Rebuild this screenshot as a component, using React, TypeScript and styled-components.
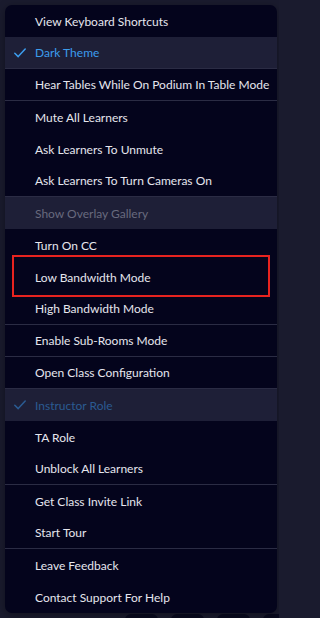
import React from "react";
import styled, { createGlobalStyle } from "styled-components";

const Global = createGlobalStyle`
  html, body { margin: 0; padding: 0; background: #1a1b2e; }
  body { width: 279px; height: 618px; overflow: hidden; font-family: Lato, "Noto Sans", sans-serif; }
`;

const Page = styled.div`
  position: relative;
  width: 279px;
  height: 618px;
  background: #1a1b2e;
  display: flex;
  flex-direction: column;
  justify-content: flex-end;
  overflow: hidden;
`;

const Toolbar = styled.div`
  display: flex;
  gap: 13px;
  padding-left: 125px;
  height: 4px;
`;

const ToolButton = styled.div`
  flex: 0 0 33px;
  height: 30px;
  border-radius: 6px;
  background: #090a1f;
`;

const Menu = styled.ul`
  position: absolute;
  top: 5px;
  left: 5px;
  width: 272px;
  margin: 0;
  padding: 0;
  list-style: none;
  background: #04041c;
  border-radius: 7px;
  overflow: hidden;
  box-shadow: 0 2px 8px rgba(0, 0, 0, 0.35);
`;

type Tone = "normal" | "active" | "disabled" | "muted";

const Row = styled.li<{ $sep?: boolean; $hl?: boolean; $tone: Tone }>`
  position: relative;
  box-sizing: border-box;
  height: 32px;
  display: flex;
  align-items: center;
  padding-left: 30px;
  font-size: 12px;
  letter-spacing: 0;
  white-space: nowrap;
  background: ${(p) => (p.$hl ? "#1e1f37" : "transparent")};
  border-bottom: ${(p) => (p.$sep ? "1px solid #2b2c44" : "none")};
  color: ${(p) =>
    p.$tone === "active"
      ? "#3c9cec"
      : p.$tone === "muted"
      ? "#2b5b92"
      : p.$tone === "disabled"
      ? "#686a7e"
      : "#e6e6ee"};
`;

const Check = styled.svg`
  position: absolute;
  left: 9px;
  top: 50%;
  transform: translateY(-50%);
  width: 12px;
  height: 10px;
`;

const Highlight = styled.div`
  position: absolute;
  left: 7px;
  right: 7px;
  top: -6px;
  bottom: -4px;
  border: 2px solid #e8231f;
  pointer-events: none;
`;

type Item = { label: string; sep?: boolean; hl?: boolean; tone?: Tone; check?: boolean; boxed?: boolean };

const items: Item[] = [
  { label: "View Keyboard Shortcuts" },
  { label: "Dark Theme", hl: true, tone: "active", check: true, sep: true },
  { label: "Hear Tables While On Podium In Table Mode", sep: true },
  { label: "Mute All Learners" },
  { label: "Ask Learners To Unmute" },
  { label: "Ask Learners To Turn Cameras On", sep: true },
  { label: "Show Overlay Gallery", hl: true, tone: "disabled" },
  { label: "Turn On CC" },
  { label: "Low Bandwidth Mode", boxed: true },
  { label: "High Bandwidth Mode", sep: true },
  { label: "Enable Sub-Rooms Mode", sep: true },
  { label: "Open Class Configuration", sep: true },
  { label: "Instructor Role", hl: true, tone: "muted", check: true },
  { label: "TA Role" },
  { label: "Unblock All Learners", sep: true },
  { label: "Get Class Invite Link" },
  { label: "Start Tour", sep: true },
  { label: "Leave Feedback" },
  { label: "Contact Support For Help" },
];

export default function App() {
  return (
    <Page>
      <Global />
      <Toolbar>
        <ToolButton />
        <ToolButton />
        <ToolButton />
        <ToolButton />
      </Toolbar>
      <Menu>
        {items.map((it) => (
          <Row key={it.label} $sep={it.sep} $hl={it.hl} $tone={it.tone ?? "normal"}>
            {it.check && (
              <Check viewBox="0 0 12 10" fill="none">
                <path d="M0.8 5.2 L4.2 8.6 L11.2 1" stroke="currentColor" strokeWidth="1.5" strokeLinecap="round" strokeLinejoin="round" />
              </Check>
            )}
            {it.label}
            {it.boxed && <Highlight />}
          </Row>
        ))}
      </Menu>
    </Page>
  );
}
